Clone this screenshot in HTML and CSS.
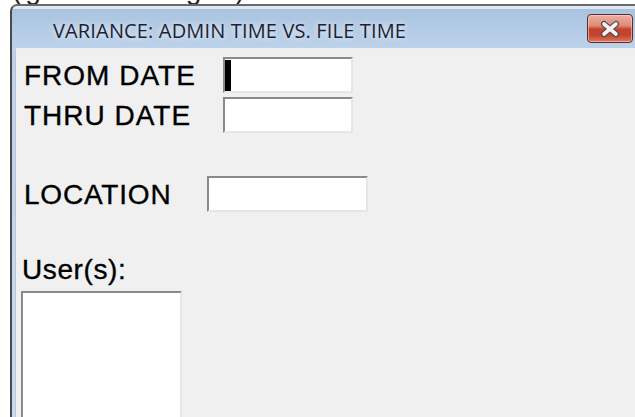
FILE: index.html
```html
<!DOCTYPE html>
<html>
<head>
<meta charset="utf-8">
<title>Variance: Admin Time vs. File Time</title>
<link rel="stylesheet" href="styles.css">
</head>
<body>
  <div class="caption"><span>(gross margin)</span></div>
  <div class="window">
    <div class="titlebar">
      <span class="title">VARIANCE: ADMIN TIME VS. FILE TIME</span>
      <button class="close" aria-label="Close">
        <svg width="24" height="18" viewBox="0 0 24 18">
          <path d="M6 4 L18 14 M18 4 L6 14" stroke="#55454a" stroke-width="6" stroke-linecap="round"/>
          <path d="M6 4 L18 14 M18 4 L6 14" stroke="#f4f4f4" stroke-width="3.6" stroke-linecap="round"/>
        </svg>
      </button>
    </div>
    <div class="client">
      <div class="row">
        <label class="label label-date">FROM DATE</label>
        <div class="field field-date"><span class="caret"></span></div>
      </div>
      <div class="row">
        <label class="label label-date">THRU DATE</label>
        <div class="field field-date"></div>
      </div>
      <div class="row row-location">
        <label class="label label-location">LOCATION</label>
        <div class="field field-location"></div>
      </div>
      <div class="users-label">User(s):</div>
      <div class="listbox"></div>
    </div>
  </div>
</body>
</html>
```
FILE: styles.css
```css
html, body {
  margin: 0;
  padding: 0;
  background: #ffffff;
  overflow: hidden;
  height: 417px;
}

/* descenders of the caption line above the dialog */
.caption {
  height: 4px;
  overflow: hidden;
  padding-left: 12px;
  font-family: "Liberation Sans", Arial, sans-serif;
  font-size: 28px;
  line-height: 28px;
  color: #222;
}

.caption span {
  display: block;
  margin-top: -24px;
  letter-spacing: 4px;
}

.window {
  margin-left: 10px;
  height: 413px;
  border-top: 2px solid #6a6a6a;
  border-left: 2px solid #4a4a4a;
  border-top-left-radius: 7px;
  background: linear-gradient(#dfe8f2 0, #dfe8f2 3px, #a9c3df 3px, #bcd2ea 42px, #c8daee 100%);
  padding-left: 3px;
  box-sizing: border-box;
  display: flex;
  flex-direction: column;
}

.titlebar {
  height: 42px;
  display: flex;
  align-items: flex-start;
  flex-shrink: 0;
}

.title {
  margin-left: 38px;
  margin-top: 11px;
  font-family: "Open Sans", "Noto Sans", sans-serif;
  font-size: 20px;
  letter-spacing: 0.15px;
  color: #1f1f33;
  text-shadow: 0 0 6px rgba(255, 255, 255, 0.9);
}

.close {
  margin-left: auto;
  margin-right: 2px;
  margin-top: 8px;
  width: 46px;
  height: 29px;
  padding: 0;
  border: 1px solid #5b2a2a;
  border-radius: 4px;
  background: linear-gradient(#eeb0a2 0%, #dd8a76 40%, #c4432c 52%, #c2452f 75%, #dd7a5e 100%);
  box-shadow: inset 0 0 0 1px rgba(255, 220, 210, 0.55);
  display: flex;
  align-items: center;
  justify-content: center;
}

.client {
  flex: 1;
  background: #f0f0f0;
  border-left: 1px solid #b8c8da;
  border-top: 1px solid #e8eef5;
  padding: 8px 0 0 8px;
  font-family: "Liberation Sans", Arial, sans-serif;
  font-size: 28px;
  color: #000;
}

.row {
  display: flex;
  align-items: center;
  height: 36px;
  margin-bottom: 4px;
}

.row-location {
  margin-top: 43px;
}

.label {
  display: block;
  -webkit-text-stroke: 0.35px #000;
  letter-spacing: 1px;
  padding-top: 2px;
}

.label-date {
  width: 199px;
}

.label-location {
  width: 183px;
  letter-spacing: 0.8px;
}

.field {
  height: 36px;
  background: #ffffff;
  box-sizing: border-box;
  border-top: 2px solid #8a8a8a;
  border-left: 2px solid #8a8a8a;
  border-right: 2px solid #e6e6e6;
  border-bottom: 2px solid #e6e6e6;
  position: relative;
}

.field-date {
  width: 130px;
}

.field-location {
  width: 161px;
}

.caret {
  position: absolute;
  left: 0;
  top: 1px;
  width: 6px;
  height: 31px;
  background: #000;
}

.users-label {
  margin-top: 42px;
  -webkit-text-stroke: 0.35px #000;
  letter-spacing: 0.6px;
  line-height: 32px;
  margin-left: -2px;
}

.listbox {
  margin-left: -3px;
  margin-top: 5px;
  width: 161px;
  height: 140px;
  background: #ffffff;
  box-sizing: border-box;
  border-top: 2px solid #8a8a8a;
  border-left: 2px solid #8a8a8a;
  border-right: 2px solid #e6e6e6;
}
```
